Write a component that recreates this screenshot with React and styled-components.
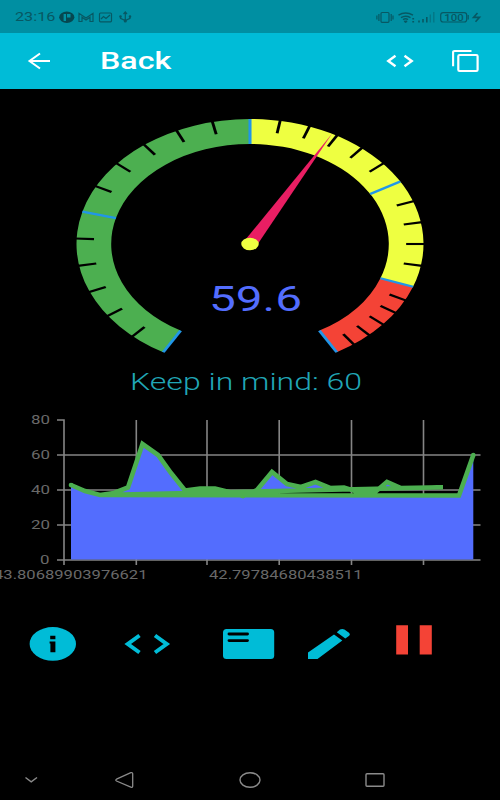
import React from "react";
import styled, { createGlobalStyle } from "styled-components";

const GlobalStyle = createGlobalStyle`
  body { margin: 0; background: #000; font-family: Roboto, "Noto Sans", sans-serif; }
  * { box-sizing: border-box; }
`;

const Screen = styled.main`
  width: 500px;
  height: 800px;
  display: flex;
  flex-direction: column;
  background: #000;
  overflow: hidden;
`;

const StatusBar = styled.header`
  height: 33px;
  display: flex;
  align-items: center;
  justify-content: space-between;
  padding: 0 18px 0 15px;
  background: #008fa2;
  color: #075863;
`;

const StatusGroup = styled.div`
  display: flex;
  align-items: center;
`;

const Clock = styled.time`
  width: 44px;
  font-size: 13.5px;
  line-height: 33px;
  white-space: nowrap;
  transform: scaleX(1.2);
  transform-origin: left center;
`;

const AppBar = styled.nav`
  height: 56px;
  display: flex;
  align-items: center;
  padding: 0 12px 0 28px;
  background: #00bcd7;
  color: #fff;
`;

const Title = styled.h1`
  flex: 1;
  margin: 0 0 0 50px;
  font-size: 23.5px;
  font-weight: 500;
  line-height: 55px;
  transform: scaleX(1.37);
  transform-origin: left center;
`;

const IconButton = styled.button`
  display: block;
  flex: none;
  padding: 0;
  border: 0;
  background: none;
  color: inherit;
  margin-left: ${(p) => p.$gap || 0}px;
`;

const Icon = styled.svg`
  display: block;
  flex: none;
  overflow: visible;
  margin-left: ${(p) => p.$gap || 0}px;
`;

const GaugePanel = styled.section`
  height: 271px;
`;

const Reminder = styled.p`
  height: 44px;
  margin: 0;
  display: flex;
  justify-content: center;
`;

const ChartPanel = styled.section`
  height: 196px;
`;

const Drawing = styled.svg`
  display: block;
  font-family: Roboto, "Noto Sans", sans-serif;
`;

const Actions = styled.section`
  height: 160px;
  display: flex;
  align-items: flex-start;
  padding: 20px 0 0 29px;
  color: #00bcd7;
`;

const Action = styled.button`
  flex: none;
  padding: 0;
  border: 0;
  background: none;
  color: ${(p) => p.$color || "inherit"};
  margin: ${(p) => p.$top || 0}px 0 0 ${(p) => p.$gap || 0}px;
`;

const SystemNav = styled.footer`
  height: 40px;
  display: flex;
  align-items: center;
  padding-left: 25px;
  color: #8b8b8b;
`;

const STRETCH = 1.388;
const polar = (deg, r) => {
  const a = (deg * Math.PI) / 180;
  return [r * Math.sin(a), -r * Math.cos(a)];
};
const band = (from, to) => {
  const large = to - from > 180 ? 1 : 0;
  return `M${polar(from, 125)}A125 125 0 ${large} 1 ${polar(to, 125)}L${polar(to, 100)}A100 100 0 ${large} 0 ${polar(from, 100)}Z`;
};
const majors = [-150, -75, 0, 60, 110, 150];
const minors = [
  -137.5, -125, -112.5, -100, -87.5, -62.5, -50, -37.5, -25, -12.5,
  10, 20, 30, 40, 50, 70, 80, 90, 100, 116.7, 123.3, 130, 136.7, 143.3,
];

function Tick({ angle, inner, outer = 125, color, width }) {
  const [x1, y1] = polar(angle, inner);
  const [x2, y2] = polar(angle, outer);
  return <line x1={x1} y1={y1} x2={x2} y2={y2} stroke={color} strokeWidth={width} />;
}

function Gauge() {
  const [tx, ty] = polar(28.2, 125);
  return (
    <Drawing width="500" height="271" viewBox="0 89 500 271">
      <g transform={`translate(250 244) scale(${STRETCH} 1)`}>
        <path d={band(-150, 0)} fill="#4caf50" />
        <path d={band(0, 110)} fill="#eeff41" />
        <path d={band(110, 150)} fill="#f44336" />
        {minors.map((a) => <Tick key={a} angle={a} inner={112.5} outer={126} color="#000" width={2.1} />)}
        {majors.map((a) => <Tick key={a} angle={a} inner={100} color="#2196e8" width={2.2} />)}
        <path d={`M${tx} ${ty}L4.4 2.4L-4.4 -2.4Z`} fill="#e91e63" />
        <circle r="6.3" fill="#eeff41" />
      </g>
      <text x="209" y="311" fontSize="35.5" fill="#536dfe" textLength="93" lengthAdjust="spacingAndGlyphs">59.6</text>
    </Drawing>
  );
}

const gridX = [136.3, 207, 279.2, 351.5, 423.5];
const series =
  "M71 485L85 491L100 495L114 493L128 487.5L142.5 444L158 455L171 473L185 490.5L200 488.5L215 488.5L229 492L243 496L257 490L272 472L287 484L301 487L315.5 482L330 488L344 487.5L358 492L374 493L387 482L401 488L443 487.2L100 495L459 495.5L473.3 455";

function Chart() {
  return (
    <Drawing width="500" height="196" viewBox="0 404 500 196">
      <g stroke="#858585" strokeWidth="1.6">
        {gridX.map((x) => <path key={x} d={`M${x} 420V565`} />)}
        {[455, 490, 525, 560].map((y) => <path key={y} d={`M57 ${y}H480.5`} />)}
        <path d="M57 420H64V565" fill="none" />
      </g>
      <path d={`${series}V559.5H71Z`} fill="#536dfe" />
      <path d={series} fill="none" stroke="#4caf50" strokeWidth="4.6" />
      <circle cx="71" cy="485" r="2.3" fill="#4caf50" />
      <circle cx="473.3" cy="455" r="2.3" fill="#4caf50" />
      <g fill="#696969" fontSize="12">
        {[80, 60, 40, 20].map((v, i) => (
          <text key={v} x="31" y={424 + i * 35} textLength="19" lengthAdjust="spacingAndGlyphs">{v}</text>
        ))}
        <text x="40" y="564" textLength="9.5" lengthAdjust="spacingAndGlyphs">0</text>
        <text x="-6" y="578.5" textLength="153.5" lengthAdjust="spacingAndGlyphs">43.80689903976621</text>
        <text x="209" y="578.5" textLength="153.5" lengthAdjust="spacingAndGlyphs">42.79784680438511</text>
      </g>
    </Drawing>
  );
}

function StatusIcons() {
  return (
    <StatusBar>
      <StatusGroup>
        <Clock>23:16</Clock>
        <Icon width="74" height="14" viewBox="59 9 74 14" fill="none" stroke="#075863" strokeWidth="1.2">
          <ellipse cx="66.8" cy="16.3" rx="7.6" ry="5.7" fill="#064750" stroke="none" />
          <path d="M63.6 13H66V20H63.6ZM67 13H70.5V16.5H67Z" fill="#008fa2" stroke="none" />
          <path d="M79 20.5V12.3L86 17L93 12.3V20.5H90V16.2L86 19L82 16.2V20.5Z" />
          <rect x="99.5" y="12" width="12" height="8.8" rx="1" />
          <path d="M101 18L103.5 15.5L106 17.5L110 14" />
          <path d="M125.3 21V11.5M123.5 13L125.3 11L127 13M120.5 15V17.3L125.3 19.5L130 17.3V15" />
          <circle cx="125.3" cy="20" r="1" />
          <circle cx="120.5" cy="15.5" r=".7" />
          <circle cx="130" cy="15.5" r=".7" />
        </Icon>
      </StatusGroup>
      <Icon width="106" height="14" viewBox="376 9 106 14" fill="none" stroke="#075863" strokeWidth="1.2">
        <rect x="381" y="11.5" width="8" height="9.8" rx="1" />
        <path d="M378.9 13V20M376.9 14.5V18.5M391.2 13V20M393 14.5V18.5" />
        <path d="M398.5 14.2Q405.5 9.8 413 14.2M401 16.6Q405.5 13.8 410.5 16.6M403 18.6Q405.5 17 408 18.6" strokeWidth="1.4" />
        <path d="M404.3 20L405.6 21L407 20M413.2 17V18.5M413.2 20V21.5" strokeWidth="1.8" />
        <path d="M419 19.5V21.5M423 18V21.5M426.8 16V21.5" strokeWidth="1.6" />
        <path d="M430.3 13.5V21.5M433.8 11V21.5" strokeWidth="1.4" opacity=".45" />
        <rect x="440.7" y="11.6" width="26" height="9.4" rx="2.5" />
        <path d="M468.2 14V18.5" />
        <text x="444.2" y="19.5" fontSize="8.9" fontWeight="500" fontFamily="Roboto, sans-serif" fill="#075863" stroke="none" textLength="19.5" lengthAdjust="spacingAndGlyphs">100</text>
        <path d="M477.5 12L473.5 16.4H479.5L475.5 20.8" strokeWidth="1.6" />
      </Icon>
    </StatusBar>
  );
}

export default function App() {
  return (
    <>
      <GlobalStyle />
      <Screen>
        <StatusIcons />
        <AppBar>
          <IconButton aria-label="Go back">
            <Icon width="22" height="16" viewBox="28 53 22 16" fill="none" stroke="currentColor" strokeWidth="2">
              <path d="M50 61H29.5M40 53.5L29.5 61L40 68.5" />
            </Icon>
          </IconButton>
          <Title>Back</Title>
          <IconButton aria-label="Code">
            <Icon width="28" height="12" viewBox="386 55 28 12" fill="none" stroke="currentColor" strokeWidth="2.4">
              <path d="M395.5 55.8L388.3 61L395.5 66.2M404.5 55.8L411.7 61L404.5 66.2" />
            </Icon>
          </IconButton>
          <IconButton aria-label="Copy" $gap={38}>
            <Icon width="36" height="22" viewBox="453 50 36 22" fill="none" stroke="currentColor">
              <path d="M454.1 66.3V52.2Q454.1 51 455.7 51H472.5" strokeWidth="2.1" />
              <rect x="459.3" y="55" width="19.3" height="16" rx="1.3" strokeWidth="2.2" />
            </Icon>
          </IconButton>
        </AppBar>
        <GaugePanel><Gauge /></GaugePanel>
        <Reminder>
          <Drawing width="500" height="44" viewBox="0 360 500 44">
            <text x="130" y="390" fontSize="24" fontWeight="300" fill="#20a6b6" textLength="232" lengthAdjust="spacingAndGlyphs">Keep in mind: 60</text>
          </Drawing>
        </Reminder>
        <ChartPanel><Chart /></ChartPanel>
        <Actions>
          <Action aria-label="Information" $top={7}>
            <Icon width="47" height="34" viewBox="29 627 47 34">
              <ellipse cx="52.8" cy="643.9" rx="23.2" ry="16.8" fill="currentColor" />
              <path d="M50.2 635.7H55.4V639.2H50.2ZM49.6 641.6H55.4V652.3H50.4V643.6H49.6Z" fill="#000" />
            </Icon>
          </Action>
          <Action aria-label="View code" $top={14} $gap={48}>
            <Icon width="47" height="20" viewBox="124 634 47 20" fill="none" stroke="currentColor" strokeWidth="4">
              <path d="M139.5 635.5L127.8 644L139.5 652.5M155 635.5L166.7 644L155 652.5" />
            </Icon>
          </Action>
          <Action aria-label="Details" $top={9} $gap={52}>
            <Icon width="51" height="30" viewBox="223 629 51 30">
              <rect x="223" y="629" width="51.2" height="30" rx="3.5" fill="currentColor" />
              <path d="M229 634H247.5M229 640.6H247.5" stroke="#000" strokeWidth="2.9" strokeLinecap="round" />
            </Icon>
          </Action>
          <Action aria-label="Edit" $top={9} $gap={34}>
            <Icon width="42" height="30" viewBox="308 629 42 30" fill="currentColor">
              <path d="M308 659V652.5L334 634.4L342.3 640.5L317.5 659ZM336.8 632.2L340 629.6Q342.2 628.4 344.4 629.6L349 632.8Q350.8 634.3 349.2 635.8L345.3 638.5Z" />
            </Icon>
          </Action>
          <Action aria-label="Pause" $top={5} $gap={46} $color="#f44336">
            <Icon width="36" height="30" viewBox="396 625 36 30" fill="currentColor">
              <path d="M396.2 625.2H408V654.6H396.2ZM419.7 625.2H431.8V654.6H419.7Z" />
            </Icon>
          </Action>
        </Actions>
        <SystemNav>
          <Icon width="12" height="6" viewBox="25 777 12 6" fill="none" stroke="currentColor" strokeWidth="1.4">
            <path d="M25.5 777.5L31.2 781.8L37 777.5" />
          </Icon>
          <Icon $gap={78} width="19" height="16" viewBox="115 772 19 16" fill="none" stroke="currentColor" strokeWidth="1.3">
            <path d="M116.5 779.2L130.8 772.7Q132.7 772.3 132.7 773.8V786Q132.7 787.7 130.8 787.2L116.5 781Q115 780 116.5 779.2Z" />
          </Icon>
          <Icon $gap={105} width="22" height="16" viewBox="239 772 22 16" fill="none" stroke="currentColor" strokeWidth="1.4">
            <ellipse cx="250" cy="780" rx="10" ry="7.3" />
          </Icon>
          <Icon $gap={104} width="20" height="14" viewBox="365 773 20 14" fill="none" stroke="currentColor" strokeWidth="1.4">
            <rect x="366" y="773.7" width="18" height="12.6" rx="1" />
          </Icon>
        </SystemNav>
      </Screen>
    </>
  );
}
